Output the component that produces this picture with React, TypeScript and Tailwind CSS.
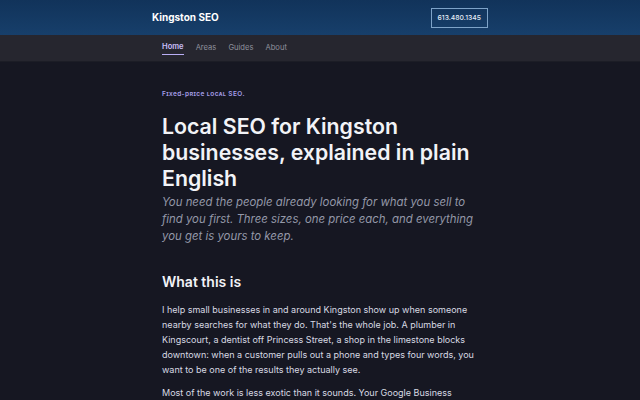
const navLinks = ["Home", "Areas", "Guides", "About"];

export default function App() {
  return (
    <div className="min-h-screen bg-[#161722] font-['Inter',sans-serif] text-[#d4d6de]">
      <header className="bg-gradient-to-b from-[#11335a] to-[#173f6b]">
        <div className="mx-auto flex h-[35px] w-[336px] items-center justify-between">
          <span className="text-[10px] font-bold text-white">Kingston SEO</span>
          <a className="border border-[#7ea3c8] px-[6px] py-[4px] text-[6.8px] leading-[10px] font-medium text-[#e6eef7]">
            613.480.1345
          </a>
        </div>
      </header>

      <nav className="border-b border-[#1c1d26] bg-[#26262f]">
        <ul className="mx-auto flex h-[26px] w-[316px] items-center gap-[12px] text-[7.6px]">
          {navLinks.map((l, i) => (
            <li
              key={l}
              className={
                i === 0
                  ? "border-b border-[#b9aef5] pb-[1px] font-semibold text-[#c9bff9]"
                  : "text-[#8e909c]"
              }
            >
              {l}
            </li>
          ))}
        </ul>
      </nav>

      <main className="mx-auto w-[316px] pt-[27px]">
        <p className="text-[6.5px] leading-[10px] font-semibold tracking-[0.06em] text-[#a49de6] [font-variant:small-caps]">
          Fixed-price local SEO.
        </p>
        <h1 className="mt-[14px] text-[21.3px] font-semibold leading-[26px] text-[#f2f3f7]">
          Local SEO for Kingston businesses, explained in plain English
        </h1>
        <p className="mt-[3px] text-[11.4px] italic leading-[17px] text-[#9498a8]">
          You need the people already looking for what you sell to find you first. Three sizes, one
          price each, and everything you get is yours to keep.
        </p>

        <h2 className="mt-[27px] text-[14px] font-semibold leading-[20px] text-[#f2f3f7]">What this is</h2>
        <p className="mt-[10px] text-[9px] leading-[15px] text-[#d8dae2]">
          I help small businesses in and around Kingston show up when someone nearby searches for
          what they do. That's the whole job. A plumber in Kingscourt, a dentist off Princess
          Street, a shop in the limestone blocks downtown: when a customer pulls out a phone and
          types four words, you want to be one of the results they actually see.
        </p>
        <p className="mt-[8px] text-[9px] leading-[15px] text-[#d8dae2]">
          Most of the work is less exotic than it sounds. Your Google Business Profile, your
          website, and the handful of places that list local businesses all need to agree with each
          other.
        </p>
      </main>
    </div>
  );
}
